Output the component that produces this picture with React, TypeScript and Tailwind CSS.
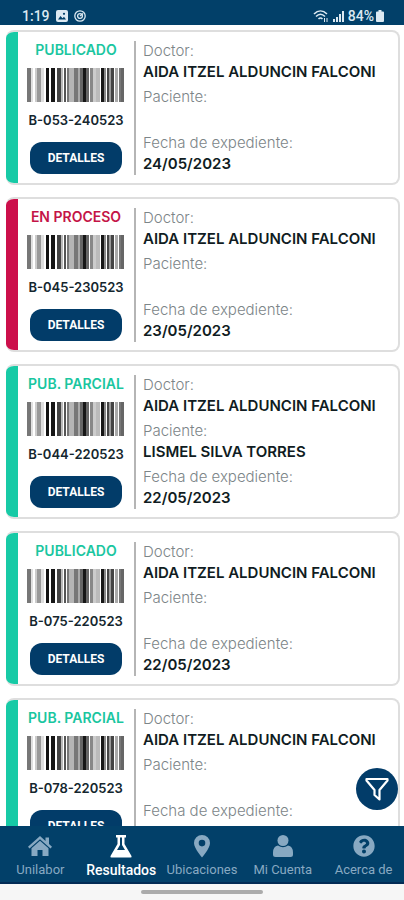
import type { ReactNode } from 'react';
import { FaQuestionCircle } from 'react-icons/fa';

interface Study {
  code: string;
  status: string;
  inProcess?: boolean;
  doctor: string;
  patient: string;
  date: string;
}

const studies: Study[] = [
  { code: 'B-053-240523', status: 'PUBLICADO', doctor: 'AIDA ITZEL ALDUNCIN FALCONI', patient: '', date: '24/05/2023' },
  { code: 'B-045-230523', status: 'EN PROCESO', inProcess: true, doctor: 'AIDA ITZEL ALDUNCIN FALCONI', patient: '', date: '23/05/2023' },
  { code: 'B-044-220523', status: 'PUB. PARCIAL', doctor: 'AIDA ITZEL ALDUNCIN FALCONI', patient: 'LISMEL SILVA TORRES', date: '22/05/2023' },
  { code: 'B-075-220523', status: 'PUBLICADO', doctor: 'AIDA ITZEL ALDUNCIN FALCONI', patient: '', date: '22/05/2023' },
  { code: 'B-078-220523', status: 'PUB. PARCIAL', doctor: 'AIDA ITZEL ALDUNCIN FALCONI', patient: '', date: '22/05/2023' },
];

// [x, width, colour]
const bars: [number, number, string][] = [
  [0, 4, '#777777'], [4, 2, '#e0e0e0'], [8, 2, '#cccccc'], [10, 4, '#999999'], [14, 3, '#dddddd'],
  [19, 3, '#111111'], [24, 4, '#161616'], [30, 4, '#444444'], [34, 2, '#bbbbbb'], [37, 2, '#555555'],
  [40, 2, '#777777'], [42, 5, '#b5b5b5'], [47, 4, '#777777'], [51, 2, '#aaaaaa'], [53, 3, '#666666'],
  [56, 3, '#161616'], [59, 3, '#666666'], [63, 3, '#888888'], [66, 3, '#cccccc'], [69, 4, '#bbbbbb'],
  [74, 3, '#161616'], [77, 2, '#888888'], [80, 2, '#444444'], [82, 2, '#999999'], [84, 3, '#444444'],
  [88, 3, '#aaaaaa'], [92, 2, '#777777'], [94, 3, '#666666'],
];

function Barcode() {
  return (
    <svg className="mt-2 h-[34px] w-[98px]" viewBox="0 0 98 34" shapeRendering="crispEdges" aria-hidden="true">
      {bars.map(([x, width, fill]) => (
        <rect key={x} x={x} y="0" width={width} height="34" fill={fill} />
      ))}
    </svg>
  );
}

function StudyCard({ study }: { study: Study }) {
  return (
    <li className="flex overflow-hidden rounded-lg border-2 border-l-0 border-[#dedede] bg-white">
      <div className={`-my-0.5 w-3 shrink-0 ${study.inProcess ? 'bg-[#cc0f4b]' : 'bg-[#17caa6]'}`} />
      <div className="flex w-[116px] shrink-0 flex-col items-center pt-2 pb-2">
        <p className={`text-sm leading-5 font-semibold whitespace-nowrap ${study.inProcess ? 'text-[#c41447]' : 'text-[#1ac6a0]'}`}>
          {study.status}
        </p>
        <Barcode />
        <p className="mt-2 text-[13px] leading-5 font-semibold whitespace-nowrap text-[#14262e]">{study.code}</p>
        <button
          type="button"
          className="mt-3 h-8 w-[92px] rounded-xl bg-[#023c69] font-['Roboto',sans-serif] text-xs font-bold text-white"
        >
          DETALLES
        </button>
      </div>
      <dl className="mt-[9px] mb-2 min-w-0 flex-1 border-l-2 border-[#b5b5b5] pl-[7px] text-[15px] whitespace-nowrap">
        <dt className="leading-5 font-light text-[#7c8588]">Doctor:</dt>
        <dd className="mb-1 h-[22px] leading-[22px] font-semibold text-[#101c22]">{study.doctor}</dd>
        <dt className="leading-5 font-light text-[#7c8588]">Paciente:</dt>
        <dd className="mb-1 h-[22px] leading-[22px] font-semibold text-[#101c22]">{study.patient}</dd>
        <dt className="leading-5 font-light text-[#7c8588]">Fecha de expediente:</dt>
        <dd className="leading-[22px] font-semibold text-[#101c22]">{study.date}</dd>
      </dl>
    </li>
  );
}

function StatusBar() {
  return (
    <header className="flex h-[25px] shrink-0 items-center justify-between bg-[#024069] pt-1.5 pr-5 pl-[22px] font-['Roboto',sans-serif] text-sm font-medium text-[#dce9f2]">
      <div className="flex items-center gap-1.5">
        <span>1:19</span>
        <svg className="size-3" viewBox="0 0 12 12" aria-hidden="true">
          <rect width="12" height="12" rx="2" fill="currentColor" />
          <path d="M2 9.5 4.5 6l2 2.2L8 6.8l2 2.7z" fill="#024069" />
          <circle cx="8" cy="3.8" r="1.1" fill="#024069" />
        </svg>
        <svg className="size-3" viewBox="0 0 12 12" fill="none" stroke="currentColor" strokeWidth="1.3" aria-hidden="true">
          <circle cx="6" cy="6" r="5.2" />
          <circle cx="6" cy="6" r="2.4" />
          <path d="M6 6 9 3.5" />
        </svg>
      </div>
      <div className="flex items-center gap-1">
        <svg className="h-3 w-4" viewBox="0 0 16 12" fill="none" stroke="currentColor" strokeWidth="1.6" aria-hidden="true">
          <path d="M1 4c4-4 9-4 13 0M3 6.5c3-3 6-3 9 0M5.5 9c1.5-1.5 2.5-1.5 4 0" />
          <path d="M11.5 8v4M14 8v4" strokeWidth="1" />
        </svg>
        <svg className="h-3 w-[11px]" viewBox="0 0 11 12" fill="currentColor" aria-hidden="true">
          <path d="M0 9h2v3H0zM3 7h2v5H3zM6 4h2v8H6zM9 1h2v11H9z" />
        </svg>
        <span className="flex items-center gap-0.5">
          84%
          <svg className="h-3 w-2" viewBox="0 0 8 12" fill="currentColor" aria-hidden="true">
            <path d="M2.5 0h3v1.5H7q1 0 1 1V11q0 1-1 1H1q-1 0-1-1V2.5q0-1 1-1h1.5z" />
          </svg>
        </span>
      </div>
    </header>
  );
}

function HomeIcon() {
  return (
    <svg className="size-6" viewBox="0 0 24 24" fill="currentColor" aria-hidden="true">
      <path d="M12 2 17.500 6.900V3.500h3.500v6.500l3 2.700-1.500 1.800L12 5.200 1.500 14.500 0 12.700z" />
      <path d="M12 6.800 20.500 14.300V22h-6v-6h-5v6h-6v-7.700z" />
    </svg>
  );
}

function FlaskIcon() {
  return (
    <svg className="size-6" viewBox="0 0 24 24" aria-hidden="true">
      <path d="M7 1h10v2.500h-1.500V10L22.500 22q.5 1.500-1 1.500h-19Q1 23.500 1.500 22L8.500 10V3.500H7z" fill="currentColor" />
      <path d="M11 3.500h2V11l3 5H8l3-5z" fill="#024069" />
    </svg>
  );
}

function PinIcon() {
  return (
    <svg className="size-6" viewBox="0 0 24 24" fill="currentColor" aria-hidden="true">
      <path fillRule="evenodd" d="M12 1a8 8 0 0 0-8 8c0 5.5 8 14.5 8 14.5S20 14.5 20 9a8 8 0 0 0-8-8zm0 4.800a3.300 3.300 0 1 1 0 6.600 3.300 3.300 0 0 1 0-6.600z" />
    </svg>
  );
}

function UserIcon() {
  return (
    <svg className="size-6" viewBox="0 0 24 24" fill="currentColor" aria-hidden="true">
      <circle cx="12" cy="6.5" r="5.5" />
      <path d="M7 11.5q5 3.500 10 0 5 1 5 7v2q0 2.500-2.500 2.500h-15Q2 23 2 20.500v-2q0-6 5-7z" />
    </svg>
  );
}

interface NavItem {
  label: string;
  icon: ReactNode;
  active?: boolean;
}

const navItems: NavItem[] = [
  { label: 'Unilabor', icon: <HomeIcon /> },
  { label: 'Resultados', icon: <FlaskIcon />, active: true },
  { label: 'Ubicaciones', icon: <PinIcon /> },
  { label: 'Mi Cuenta', icon: <UserIcon /> },
  { label: 'Acerca de', icon: <FaQuestionCircle className="size-[22px]" /> },
];

export default function App() {
  return (
    <div className="flex h-screen flex-col bg-white font-['Inter',sans-serif]">
      <StatusBar />
      <main className="relative min-h-0 flex-1 overflow-hidden">
        <ul className="flex flex-col gap-3 pt-[5px] pr-1 pl-1.5">
          {studies.map((study) => (
            <StudyCard key={study.code} study={study} />
          ))}
        </ul>
        <button
          type="button"
          aria-label="Filtrar"
          className="absolute right-1.5 bottom-4 flex size-[42px] items-center justify-center rounded-full bg-[#023c69] text-white"
        >
          <svg className="size-6" viewBox="0 0 24 24" fill="none" stroke="currentColor" strokeWidth="2.2" strokeLinejoin="round" aria-hidden="true">
            <path d="M1.5 2h21v1.500L14.500 13v9.500L9.500 18v-5L1.500 3.500z" />
          </svg>
        </button>
      </main>
      <nav className="grid h-[58px] shrink-0 grid-cols-5 border-b-2 border-[#022b55] bg-[#024069] font-['Roboto',sans-serif]">
        {navItems.map((item) => (
          <a
            key={item.label}
            href="#"
            aria-current={item.active ? 'page' : undefined}
            className={`flex flex-col items-center gap-0.5 pt-2 whitespace-nowrap ${item.active ? 'text-sm font-medium text-white' : 'text-[13px] text-[#88a9c2]'}`}
          >
            <span className="flex h-6 items-center">{item.icon}</span>
            <span className="leading-5">{item.label}</span>
          </a>
        ))}
      </nav>
      <footer className="flex h-4 shrink-0 items-center justify-center bg-[#f6f6f6]">
        <div className="h-1 w-[122px] rounded-full bg-[#ababab]" />
      </footer>
    </div>
  );
}
